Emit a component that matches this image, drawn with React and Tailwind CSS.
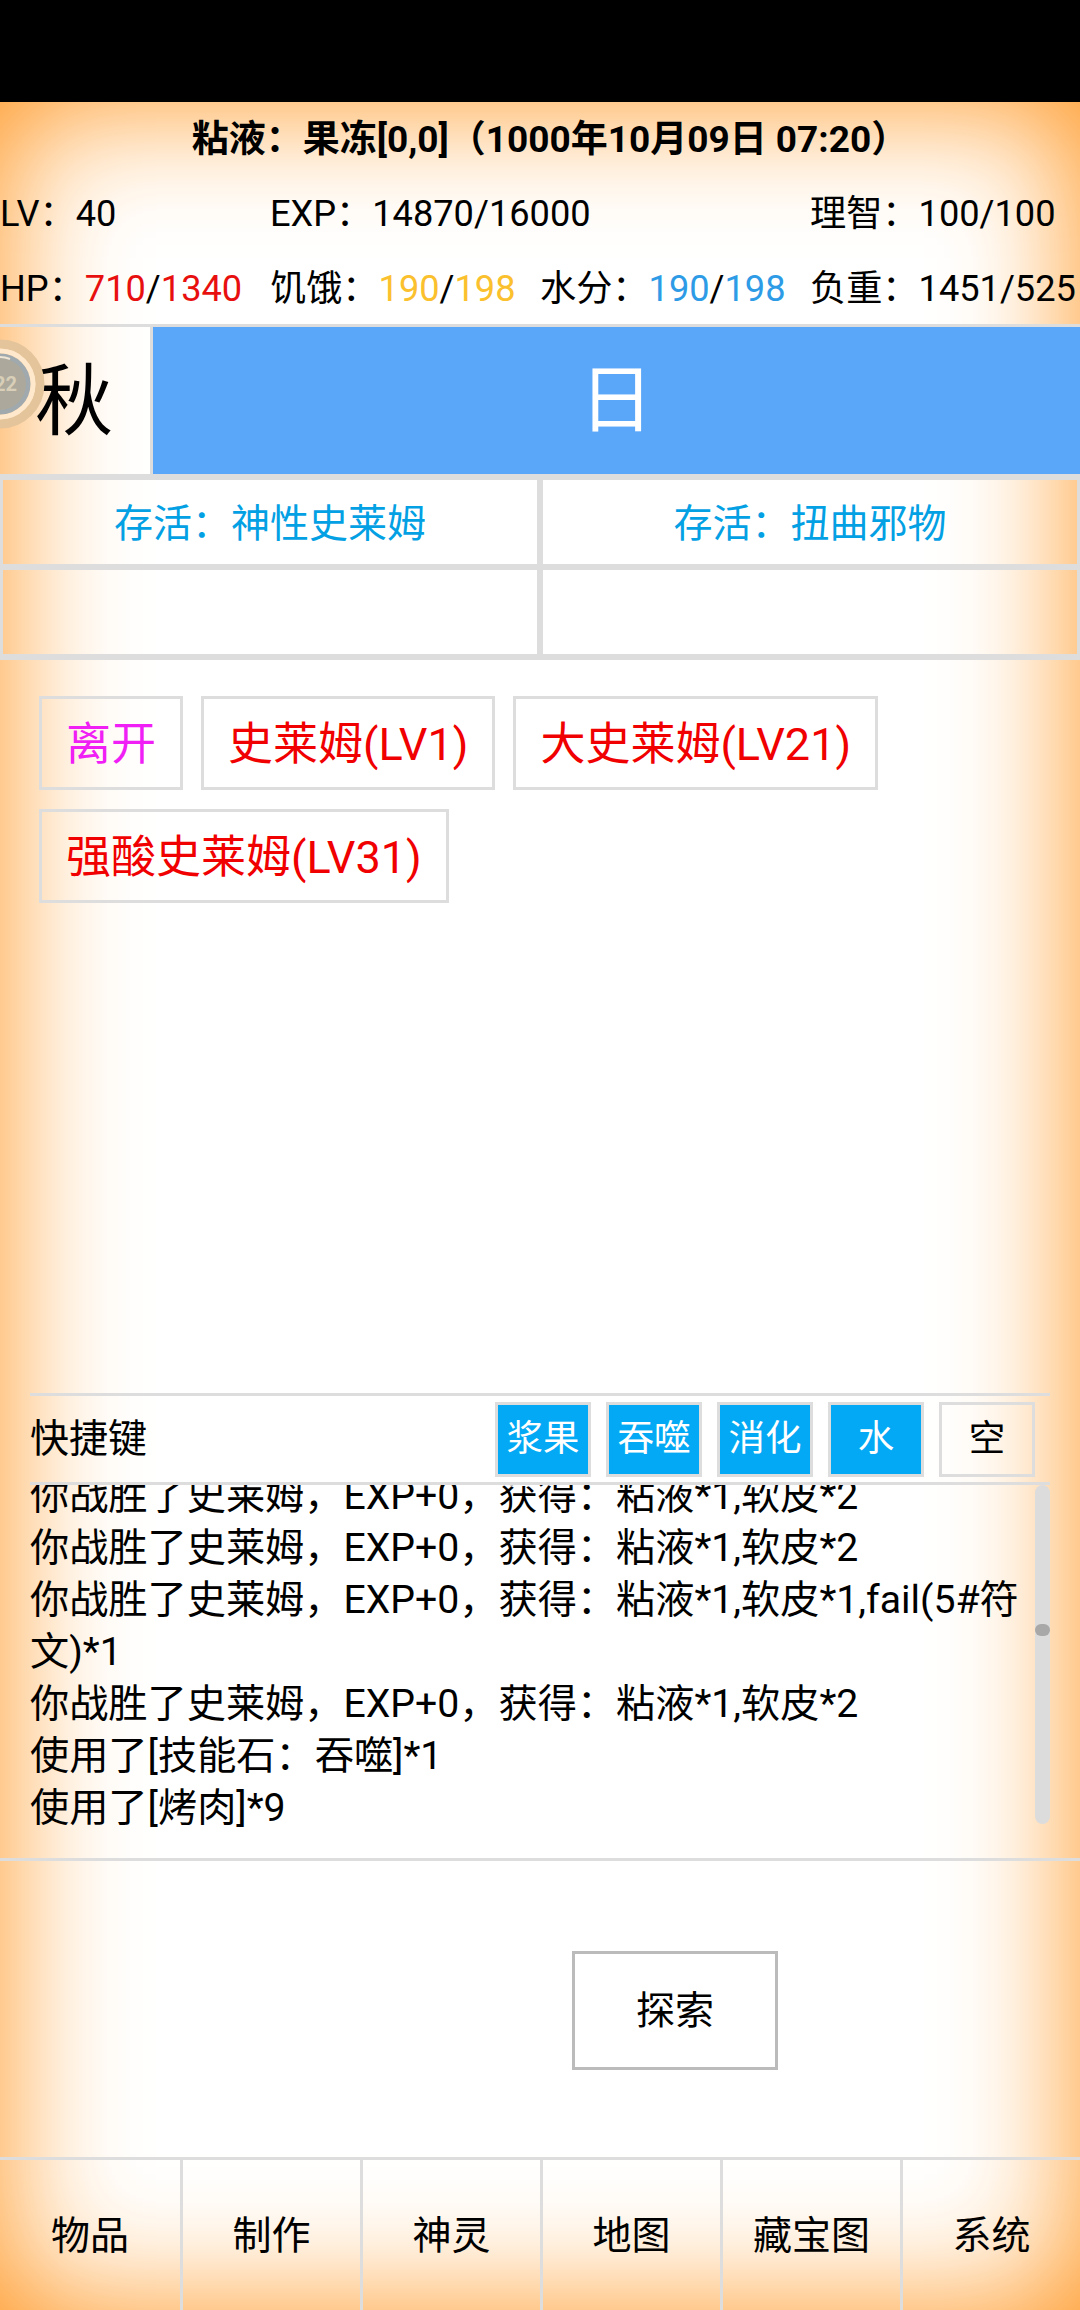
import React from "react";

const font = "font-['Roboto','Noto_Sans_CJK_SC',sans-serif]";

const Season = () => (
  <svg viewBox="0 0 50 96" className="absolute left-0 top-[9px] h-[96px] w-[50px]">
    <circle cx="0" cy="48" r="40" fill="none" stroke="#e3c49b" strokeWidth="9" />
    <circle cx="0" cy="48" r="33" fill="none" stroke="#ffe8cc" strokeWidth="5" />
    <circle cx="0" cy="48" r="30.5" fill="#9fa9ae" />
    <circle cx="0" cy="48" r="26" fill="#aca99c" />
    <path d="M-2 21 A27 27 0 0 1 10 23" fill="none" stroke="#efe6d6" strokeWidth="2" />
    <text x="17" y="55" fontSize="20" fontWeight="700" fill="#d9cfb8" textAnchor="end">
      22
    </text>
  </svg>
);

const Shortcut = ({ label, on }) => (
  <button
    className={`flex h-[75px] w-[96px] items-center justify-center border-[3px] border-[#dddddd] text-[36.5px] ${
      on ? "bg-[#03a9f4] text-white" : "text-black"
    }`}
  >
    {label}
  </button>
);

const log = [
  "你战胜了史莱姆，EXP+0，获得：粘液*1,软皮*2",
  "你战胜了史莱姆，EXP+0，获得：粘液*1,软皮*2",
  "你战胜了史莱姆，EXP+0，获得：粘液*1,软皮*1,fail(5#符文)*1",
  "你战胜了史莱姆，EXP+0，获得：粘液*1,软皮*2",
  "使用了[技能石：吞噬]*1",
  "使用了[烤肉]*9",
];

export default function App() {
  return (
    <div className={`${font} w-[1080px] h-[2310px] bg-black pt-[102px] text-black`}>
      <div className="flex h-[2208px] flex-col bg-white shadow-[inset_0_0_130px_#ff9218]">
        <div className="flex h-[73px] items-center justify-center pt-[3px] pl-[20px] text-[37px] font-bold">
          粘液：果冻[0,0]（1000年10月09日 07:20）
        </div>
        <div className="grid h-[75px] grid-cols-4 items-center pt-[3px] text-[36.2px]">
          <div>LV：40</div>
          <div className="col-span-2">EXP：14870/16000</div>
          <div>理智：100/100</div>
        </div>
        <div className="grid h-[74px] grid-cols-4 items-center pt-[4px] text-[36.2px] whitespace-nowrap">
          <div>
            HP：<span className="text-[#e8100f]">710</span>/<span className="text-[#e8100f]">1340</span>
          </div>
          <div>
            饥饿：<span className="text-[#fbc02d]">190</span>/<span className="text-[#fbc02d]">198</span>
          </div>
          <div>
            水分：<span className="text-[#2e9be6]">190</span>/<span className="text-[#2e9be6]">198</span>
          </div>
          <div>负重：1451/525</div>
        </div>

        <div className="flex h-[150px] border-t-[3px] border-[#dddddd]">
          <div className="relative flex w-[153px] items-center justify-center overflow-hidden border-r-[3px] border-[#dddddd] pt-[3px] pr-[2px] text-[78px]">
            <Season />
            <span>秋</span>
          </div>
          <div className="flex flex-1 items-center justify-center bg-[#5aa6f8] text-[74px] text-white">日</div>
        </div>

        <div className="grid h-[186px] grid-cols-2 grid-rows-2 border-y-[3px] border-[#dddddd] text-[39px] text-[#03a0e4]">
          <div className="flex items-center justify-center border-[3px] border-[#dddddd] pt-[4px]">存活：神性史莱姆</div>
          <div className="flex items-center justify-center border-[3px] border-[#dddddd] pt-[4px]">存活：扭曲邪物</div>
          <div className="border-[3px] border-[#dddddd]" />
          <div className="border-[3px] border-[#dddddd]" />
        </div>

        <div className="flex h-[733px] flex-wrap content-start gap-x-[18px] gap-y-[19px] pl-[39px] pt-[36px] pr-[100px] text-[45px] text-[#f00000]">
          <button className="h-[94px] border-[3px] border-[#dddddd] px-[24px] pt-[3px] text-[#f01ff5]">离开</button>
          <button className="h-[94px] border-[3px] border-[#dddddd] px-[24px] pt-[3px]">史莱姆(LV1)</button>
          <button className="h-[94px] border-[3px] border-[#dddddd] px-[24px] pt-[3px]">大史莱姆(LV21)</button>
          <button className="h-[94px] border-[3px] border-[#dddddd] px-[24px] pt-[3px]">强酸史莱姆(LV31)</button>
        </div>

        <div className="mx-[30px] flex h-[92px] items-center justify-between border-y-[3px] border-[#dddddd] pr-[15px] text-[39px]">
          <span>快捷键</span>
          <div className="flex gap-[15px]">
            <Shortcut label="浆果" on />
            <Shortcut label="吞噬" on />
            <Shortcut label="消化" on />
            <Shortcut label="水" on />
            <Shortcut label="空" />
          </div>
        </div>

        <div className="relative mx-[30px] h-[373px] overflow-hidden text-[39.2px] leading-[52px]">
          <div className="-mt-[15px] w-[1005px]">
            {log.map((line, i) => (
              <div key={i}>{line}</div>
            ))}
          </div>
          <div className="absolute right-0 top-0 h-[339px] w-[15px] rounded-full bg-[#dcdcdc]">
            <div className="absolute left-0 top-[139px] h-[12px] w-[15px] rounded-full bg-[#a8a8a8]" />
          </div>
        </div>

        <div className="flex h-[299px] flex-col border-t-[3px] border-[#dddddd]">
          <div className="mt-[90px] ml-[572px] flex h-[119px] w-[206px] items-center justify-center border-[3px] border-[#bbbbbb] pt-[2px] text-[39px]">
            探索
          </div>
        </div>

        <div className="grid flex-1 grid-cols-6 border-t-[3px] border-[#dddddd] text-[39px]">
          {["物品", "制作", "神灵", "地图", "藏宝图", "系统"].map((n, i) => (
            <div key={n} className={`flex items-center justify-center pt-[2px] ${i > 0 ? "border-l-[3px] border-[#dddddd]" : ""}`}>
              {n}
            </div>
          ))}
        </div>
      </div>
    </div>
  );
}
